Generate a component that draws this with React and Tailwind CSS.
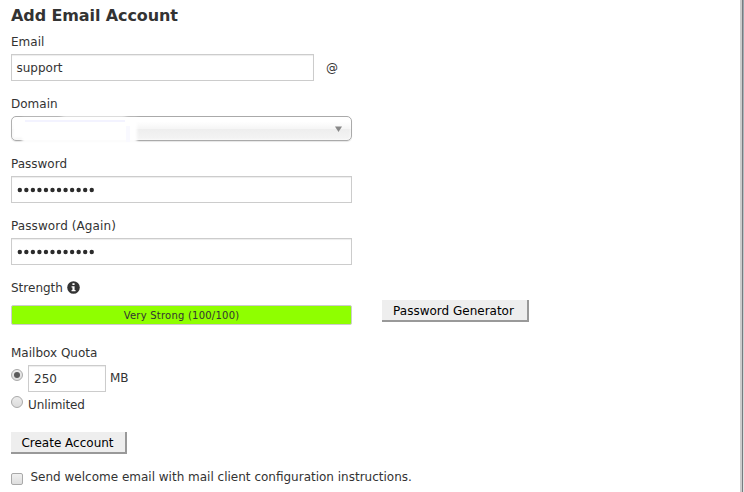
import React, { useState } from "react";

const Label = ({ children }) => (
  <div className="flex h-[18px] items-center whitespace-nowrap leading-[18px]">{children}</div>
);

const TextField = ({ value, className }) => (
  <div
    className={`flex h-[27px] items-center border border-[#ccc] bg-white shadow-[inset_0_1px_1px_rgba(0,0,0,0.075)] ${className}`}
  >
    {value}
  </div>
);

// Masked value, one dot per character
const PasswordField = ({ length }) => (
  <div className="mt-[3px] flex h-[27px] w-[341px] items-center border border-[#ccc] bg-white px-[5px] pt-px shadow-[inset_0_1px_1px_rgba(0,0,0,0.075)]">
    <svg width="80" height="6" viewBox="0 0 80 6" fill="#2b2b2b">
      {Array.from({ length }).map((_, i) => (
        <circle key={i} cx={2.8 + i * 6.54} cy="3" r="2.2" />
      ))}
    </svg>
  </div>
);

const Radio = ({ checked, onClick, className }) => (
  <button
    type="button"
    onClick={onClick}
    className={`flex size-[12px] shrink-0 items-center justify-center rounded-full border border-[#a9a9a9] bg-linear-to-b from-[#ececec] to-[#dcdcdc] ${className}`}
  >
    {checked && <span className="size-[6px] rounded-full bg-[#5a5a5a]" />}
  </button>
);

const Button = ({ children, className }) => (
  <button
    type="button"
    className={`h-[22px] shrink-0 whitespace-nowrap border-r-2 border-b-2 border-[#999] bg-[#eee] pt-px text-center leading-[20px] text-black ${className}`}
  >
    {children}
  </button>
);

const App = () => {
  const [quota, setQuota] = useState("limited");

  return (
    <div className="flex h-[492px] w-[744px] overflow-hidden bg-white font-['DejaVu_Sans',Verdana,sans-serif] text-[12px] text-[#333]">
      <form className="w-[740px] shrink-0 pl-[11px]">
        <h2 className="h-[33px] pt-[6px] text-[16px] leading-[20px] font-bold tracking-[-0.1px]">Add Email Account</h2>

        <Label>Email</Label>
        <div className="mt-[3px] flex items-center">
          <TextField value="support" className="w-[303px] pl-[4.5px]" />
          <span className="ml-3">@</span>
        </div>

        <div className="mt-[14px]">
          <Label>Domain</Label>
          <div className="relative mt-[3px] flex h-[25px] w-[341px] items-center justify-end rounded-[5px] border border-[#aaa] bg-[linear-gradient(#fff_20%,#f6f6f6_50%,#eee_52%,#f4f4f4_100%)] pr-[9px] shadow-[inset_0_0_3px_#fff,0_1px_1px_rgba(0,0,0,0.1)]">
            {/* Hidden domain name */}
            <span className="absolute top-[3px] left-[1px] h-[18px] w-[20px] bg-white blur-[1px]" />
            <span className="absolute top-px left-[10px] h-[25px] w-[115px] bg-white blur-[1.5px]" />
            <span className="absolute -top-[3px] left-[50px] h-[10px] w-[64px] bg-white/60 blur-[2px]" />
            <span className="absolute top-[3px] left-[13px] h-[2px] w-[100px] bg-[#f3f3ff]" />
            <span className="absolute top-[9px] left-[114px] h-[16px] w-[4px] bg-[#f9f9ff]" />
            <svg width="7" height="6" viewBox="0 0 7 6" fill="#888">
              <path d="M0 0.5h7L3.5 6z" />
            </svg>
          </div>
        </div>

        <div className="mt-[14px]">
          <Label>Password</Label>
          <PasswordField length={12} />
        </div>

        <div className="mt-[14px]">
          <Label>
            <span className="tracking-[0.1px]">Password (Again)</span>
          </Label>
          <PasswordField length={12} />
        </div>

        <div className="mt-[14px] flex h-[46px]">
          <div className="w-[341px]">
            <Label>
              Strength
              <svg className="mb-px ml-[4px]" width="13" height="13" viewBox="0 0 12 12">
                <circle cx="6" cy="6" r="5.8" fill="#333" />
                <path d="M5 2h2v1.6H5zM4.2 4.8H7v3.4h.9v1.3H4.2V8.2H5V6.1h-.8z" fill="#fff" />
              </svg>
            </Label>
            <div className="mt-[8px] h-[20px] rounded-[2px] border border-[#ccc] bg-[#8fff00] text-center text-[10px] leading-[20px] tracking-[0.23px]">
              Very Strong (100/100)
            </div>
          </div>
          <Button className="mt-[21px] ml-[30px] w-[147px] pr-[2px]">Password Generator</Button>
        </div>

        <div className="mt-[19px]">
          <Label>Mailbox Quota</Label>
          <div className="mt-[3px] flex">
            <Radio checked={quota === "limited"} onClick={() => setQuota("limited")} className="mt-[4px]" />
            <TextField value="250" className="ml-[5px] w-[78px] pl-[5px]" />
            <span className="ml-1 leading-[26px]">MB</span>
          </div>
          <div className="mt-[4px] flex">
            <Radio checked={quota === "unlimited"} onClick={() => setQuota("unlimited")} />
            <span className="ml-[5px] leading-[18px] tracking-[-0.1px]">Unlimited</span>
          </div>
        </div>

        <Button className="mt-[18px] block w-[116px] pr-px">Create Account</Button>

        <div className="mt-[13px] flex">
          <span className="mt-[6px] size-[12px] shrink-0 rounded-[2px] border border-[#a9a9a9] bg-linear-to-b from-[#f0f0f0] to-[#dedede]" />
          <span className="ml-[7.5px] whitespace-nowrap leading-[20px]">
            Send welcome email with mail client configuration instructions.
          </span>
        </div>
      </form>

      {/* Page edge */}
      <div className="w-[2px] bg-[#ccc]" />
      <div className="w-px bg-[#777b7f]" />
      <div className="w-px bg-linear-to-b from-[#9aa4ac] to-[#e4e4e4]" />
    </div>
  );
};

export default App;
